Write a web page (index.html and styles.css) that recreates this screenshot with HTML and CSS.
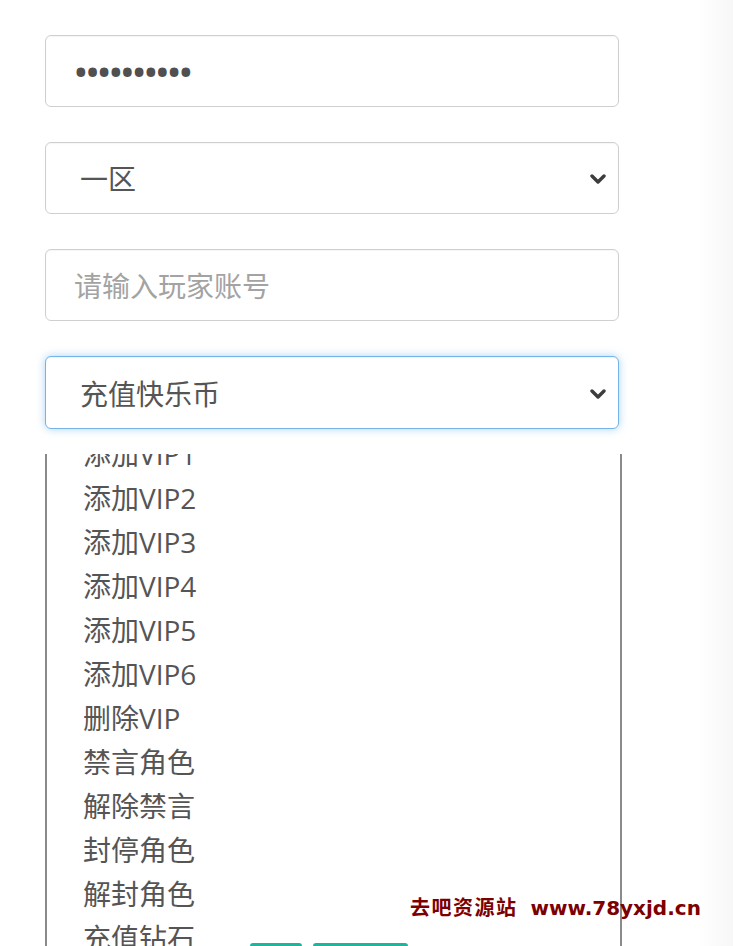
FILE: index.html
```html
<!DOCTYPE html>
<html lang="zh-CN">
<head>
<meta charset="utf-8">
<title>GM</title>
<link rel="stylesheet" href="styles.css">
</head>
<body>
<div class="page">
  <form class="form">
    <input class="control pwd" type="password" value="1234567890">
    <div class="select-wrap">
      <select class="control select"><option>一区</option></select>
      <svg class="chev" viewBox="0 0 16 10" width="16" height="10"><path d="M2 2 L8 8 L14 2" fill="none" stroke="#3d3d3d" stroke-width="3.4" stroke-linecap="round" stroke-linejoin="round"/></svg>
    </div>
    <input class="control" type="text" placeholder="请输入玩家账号">
    <div class="select-wrap">
      <select class="control select focus"><option>充值快乐币</option></select>
      <svg class="chev" viewBox="0 0 16 10" width="16" height="10"><path d="M2 2 L8 8 L14 2" fill="none" stroke="#3d3d3d" stroke-width="3.4" stroke-linecap="round" stroke-linejoin="round"/></svg>
    </div>
    <div class="listbox">
      <ul class="options">
        <li>添加VIP1</li>
        <li>添加VIP2</li>
        <li>添加VIP3</li>
        <li>添加VIP4</li>
        <li>添加VIP5</li>
        <li>添加VIP6</li>
        <li>删除VIP</li>
        <li>禁言角色</li>
        <li>解除禁言</li>
        <li>封停角色</li>
        <li>解封角色</li>
        <li>充值钻石</li>
      </ul>
    </div>
  </form>
  <div class="side-shade"></div>
  <span class="btn btn-a"></span>
  <span class="btn btn-b"></span>
  <div class="watermark"><span class="wm-cn">去吧资源站</span><span class="wm-en">www.78yxjd.cn</span></div>
</div>
</body>
</html>
```
FILE: styles.css
```css
html, body {
  margin: 0;
  padding: 0;
  background: #ffffff;
  overflow: hidden;
}
.page {
  position: relative;
  width: 733px;
  height: 946px;
  overflow: hidden;
  font-family: "Open Sans", "Noto Sans CJK SC", sans-serif;
}
.form {
  display: flex;
  flex-direction: column;
  gap: 35px;
  width: 574px;
  padding: 35px 0 0 45px;
  margin: 0;
}
.control {
  box-sizing: border-box;
  display: block;
  width: 574px;
  height: 72px;
  margin: 0;
  border: 1px solid #cfcfcf;
  border-radius: 6px;
  background: #fff;
  font-family: "Noto Sans CJK SC", sans-serif;
  font-size: 28px;
  color: #555;
  padding: 0 28px;
  outline: none;
  box-shadow: inset 0 1px 1px rgba(0,0,0,0.04);
}
.control::placeholder {
  color: #a3a3a3;
}
.pwd {
  font-family: "Open Sans", sans-serif;
  font-size: 31px;
  font-weight: bold;
  letter-spacing: 0;
  padding-left: 29px;
  color: #505050;
}
.select-wrap {
  position: relative;
}
.select {
  appearance: none;
  -webkit-appearance: none;
  padding-left: 34px;
}
.focus {
  height: 73px;
  border-color: #75b4e6;
  box-shadow: 0 0 8px rgba(102,175,233,0.55), inset 0 1px 1px rgba(0,0,0,0.05);
}
.chev {
  position: absolute;
  right: 13px;
  top: 50%;
  margin-top: -4px;
  pointer-events: none;
}
.listbox {
  box-sizing: border-box;
  width: 577px;
  height: 500px;
  margin-top: -10px;
  border-left: 2px solid #8a8a8a;
  border-right: 2px solid #8a8a8a;
  background: #fff;
  overflow: hidden;
}
.options {
  list-style: none;
  margin: -22px 0 0 0;
  padding: 0 0 0 36px;
}
.options li {
  height: 44px;
  line-height: 44px;
  font-family: "Open Sans", "Noto Sans CJK SC", sans-serif;
  font-size: 28px;
  color: #555;
  white-space: nowrap;
}
.side-shade {
  position: absolute;
  top: 0;
  right: 0;
  width: 36px;
  height: 946px;
  background: linear-gradient(to right, #ffffff, #f7f7f7);
}
.btn {
  position: absolute;
  top: 943px;
  height: 30px;
  border-radius: 3px;
  background: #1fb59c;
}
.btn-a {
  left: 250px;
  width: 52px;
}
.btn-b {
  left: 313px;
  width: 95px;
}
.watermark {
  position: absolute;
  left: 410px;
  top: 895px;
  color: #7d0000;
  font-weight: bold;
  white-space: nowrap;
  line-height: 24px;
}
.wm-cn {
  font-family: "Noto Sans CJK SC", sans-serif;
  font-size: 20px;
  letter-spacing: 1.5px;
}
.wm-en {
  font-family: "DejaVu Sans", sans-serif;
  font-size: 20px;
  margin-left: 13px;
  letter-spacing: 0;
}
```
